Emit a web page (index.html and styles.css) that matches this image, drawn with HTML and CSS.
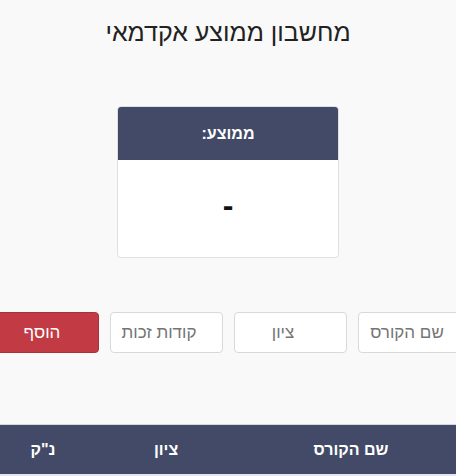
FILE: index.html
```html
<!DOCTYPE html>
<html lang="he" dir="rtl">
<head>
<meta charset="utf-8">
<link rel="stylesheet" href="styles.css">
</head>
<body>
<div class="page">
  <h1 class="title">מחשבון ממוצע אקדמאי</h1>
  <div class="card">
    <div class="card-head">ממוצע:</div>
    <div class="card-body">-</div>
  </div>
  <div class="form-row">
    <input class="field" type="text" placeholder="שם הקורס">
    <input class="field" type="text" placeholder="ציון">
    <input class="field" type="text" placeholder="קודות זכות">
    <button class="add-btn" type="button">הוסף</button>
  </div>
  <div class="table">
    <div class="thead">
      <div class="th">שם הקורס</div>
      <div class="th">ציון</div>
      <div class="th">נ"ק</div>
    </div>
    <div class="tbody"></div>
  </div>
</div>
</body>
</html>
```
FILE: styles.css
```css
html, body {
  margin: 0;
  padding: 0;
  background: #f9f9f9;
  overflow: hidden;
}
body {
  font-family: "Liberation Sans", Arial, sans-serif;
  color: #222;
  width: 456px;
  height: 476px;
}
.page {
  display: flex;
  flex-direction: column;
  align-items: center;
}
.title {
  margin: 14px 0 0 0;
  font-size: 25px;
  font-weight: normal;
  line-height: 36px;
  color: #222;
}
.card {
  margin-top: 56px;
  width: 222px;
  background: #fff;
  border: 1px solid #e0e0e0;
  border-radius: 4px;
  overflow: hidden;
  box-sizing: border-box;
}
.card-head {
  background: #434a67;
  color: #fff;
  font-weight: bold;
  font-size: 16px;
  height: 53px;
  display: flex;
  align-items: center;
  justify-content: center;
}
.card-body {
  height: 97px;
  display: flex;
  align-items: center;
  justify-content: center;
  font-size: 32px;
  font-weight: bold;
  color: #111;
  padding-bottom: 6px;
  box-sizing: border-box;
}
.form-row {
  display: flex;
  gap: 11px;
  margin-top: 54px;
  flex-shrink: 0;
}
.field {
  width: 113px;
  height: 41px;
  flex-shrink: 0;
  box-sizing: border-box;
  border: 1px solid #d9d9d9;
  border-radius: 4px;
  background: #fff;
  font-family: "Liberation Sans", Arial, sans-serif;
  font-size: 17px;
  padding: 0 22px 0 8px;
  text-align: center;
  direction: rtl;
}
.field::placeholder {
  color: #757575;
}
.add-btn {
  width: 113px;
  height: 41px;
  flex-shrink: 0;
  box-sizing: border-box;
  border: 1px solid #a8323a;
  border-radius: 4px;
  background: #c23b44;
  color: #fff;
  font-family: "Liberation Sans", Arial, sans-serif;
  font-size: 17px;
}
.table {
  align-self: stretch;
  margin-top: 71px;
}
.thead {
  display: grid;
  grid-template-columns: 210px 160px 86px;
  height: 50px;
  background: #434a67;
  border-top: 1px solid #d6d8e0;
  box-sizing: border-box;
}
.th {
  display: flex;
  align-items: center;
  justify-content: center;
  color: #fff;
  font-weight: bold;
  font-size: 16px;
}
.tbody {
  height: 3px;
  background: #e5e7ee;
}
```
